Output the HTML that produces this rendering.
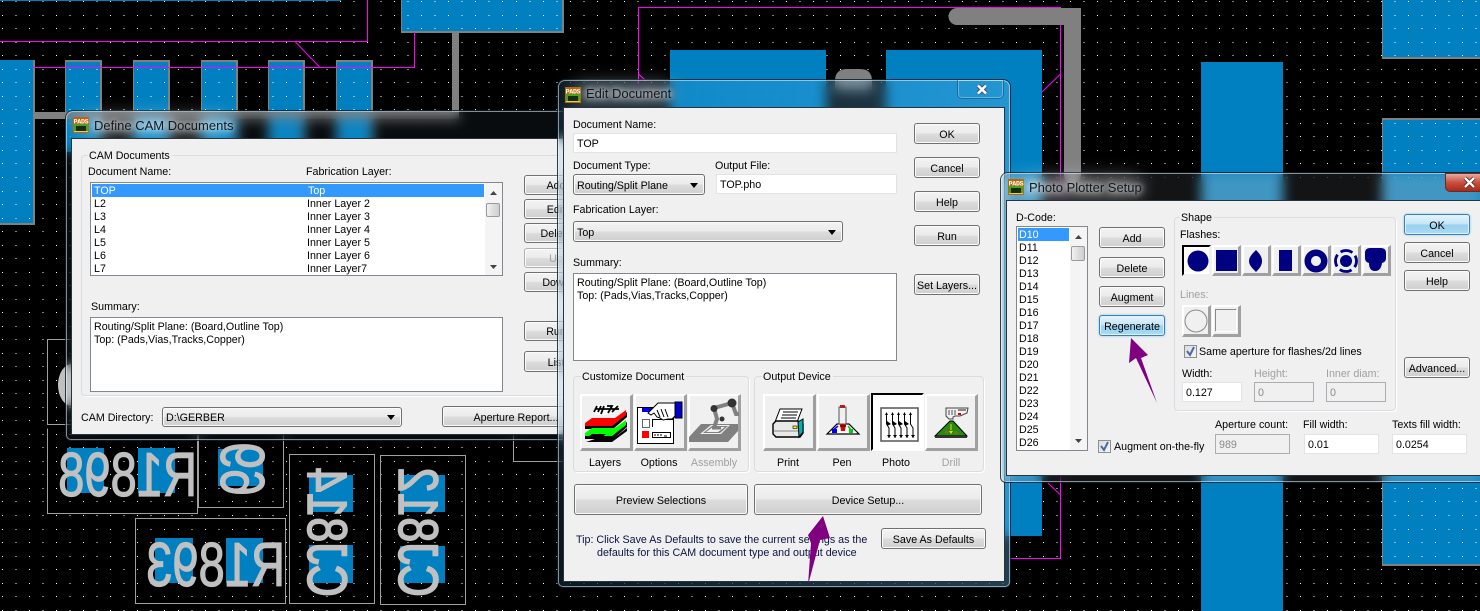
<!DOCTYPE html>
<html><head><meta charset="utf-8"><title>CAM Documents</title>
<style>
html,body{margin:0;padding:0;background:#000;width:1480px;height:611px;overflow:hidden}
#r{position:relative;width:1480px;height:611px;overflow:hidden;font:10.7px/13px "Liberation Sans",sans-serif;color:#000}
#r svg{position:absolute;left:0;top:0;overflow:visible}
.a{position:absolute;box-sizing:border-box}
.t{position:absolute;white-space:pre;height:13px;margin-top:1px}
.g{color:#a0a0a0}
.frame{position:absolute;box-sizing:border-box;border-radius:7px 7px 5px 5px;backdrop-filter:blur(6px);-webkit-backdrop-filter:blur(6px);box-shadow:0 0 0 1px rgba(10,30,45,.85),inset 0 0 0 1px rgba(235,245,250,.55)}
.client{position:absolute;box-sizing:border-box;background:#f0f0f0;box-shadow:0 0 0 1px #27343e}
.title{position:absolute;white-space:pre;font-size:13px;line-height:16px;margin-top:1px;color:#101820;text-shadow:0 0 6px #fff,0 0 10px rgba(255,255,255,.8)}
.glow{position:absolute;background:rgba(255,255,255,.38);filter:blur(9px);border-radius:10px}
.b{position:absolute;box-sizing:border-box;display:flex;align-items:center;justify-content:center;white-space:pre;padding-top:3px;border:1px solid #707070;border-radius:3px;background:linear-gradient(#f3f3f3,#ebebeb 48%,#dcdcdc 52%,#cfcfcf);box-shadow:inset 0 0 0 1px #fbfbfb;color:#000}
.h{border-color:#3c7fb1;background:linear-gradient(#e5f4fc,#c4e5f6 48%,#98d1ef 52%,#a9dbf6);box-shadow:inset 0 0 0 1px #dff2fc,0 0 2px #7cc4ee}
.d{border-color:#adb2b5;color:#a0a0a0}
.c{justify-content:flex-start;padding-left:3px}
.c:after{content:"";position:absolute;right:6px;top:50%;margin-top:-2px;border:4px solid transparent;border-top:5px solid #000;border-bottom:0}
.i{position:absolute;box-sizing:border-box;background:#fff;border:1px solid #e2e3e5;padding-left:3px;line-height:20px;white-space:pre}
.o{border-color:#abadb3;background:#f0f0f0;color:#8a8a8a}
.list{position:absolute;box-sizing:border-box;background:#fff;border:1px solid #828790}
.grp{position:absolute;box-sizing:border-box;border:1px solid #d8dde2;border-radius:4px;box-shadow:1px 1px 0 #fff}
.lg{position:absolute;background:#f0f0f0;padding:0 2px 0 1px;height:13px;margin-top:1px;white-space:pre}
.sel{position:absolute;background:#3399ff}
.sb{position:absolute;background:#f4f4f4}
.th{position:absolute;box-sizing:border-box;border:1px solid #9a9a9a;border-radius:2px;background:linear-gradient(90deg,#f2f2f2,#dcdcdc 55%,#cfcfcf)}
.ib{position:absolute;box-sizing:border-box;background:#f0f0f0;border-style:solid;border-width:2px 3px 3px 2px;border-color:#fff #a0a0a0 #a0a0a0 #fff}
.ip{background:#fff;border-color:#000 #fff #fff #000;border-width:2px 2px 2px 2px}
.cb{position:absolute;box-sizing:border-box;width:13px;height:13px;border:1px solid #8e8f8f;background:linear-gradient(135deg,#dcdcdc,#f6f6f6)}
</style></head><body><div id="r">

<svg width="1480" height="611">
<g fill="#808080">
<rect x="0" y="60" width="35" height="165"/>
<rect x="65" y="60" width="37" height="90"/><rect x="133" y="60" width="37" height="90"/><rect x="201" y="60" width="37" height="90"/><rect x="268" y="60" width="37" height="90"/><rect x="336" y="60" width="37" height="90"/>
<rect x="401" y="0" width="163" height="33"/>
<rect x="1382" y="0" width="98" height="59"/><rect x="1382" y="118" width="98" height="448"/>
</g>
<g fill="#0080c0">
<rect x="0" y="60" width="33" height="163"/>
<rect x="66" y="62" width="34" height="90"/><rect x="134" y="62" width="34" height="90"/><rect x="202" y="62" width="34" height="90"/><rect x="269" y="62" width="34" height="90"/><rect x="337" y="62" width="34" height="90"/>
<rect x="402" y="0" width="160" height="31"/>
<rect x="1383" y="0" width="97" height="57"/><rect x="1383" y="120" width="97" height="444"/>
</g>
<path fill="none" stroke="#fff" stroke-width="1" stroke-dasharray="1 12.52" shape-rendering="crispEdges" d="M2 1.5H1480M2 15.5H1480M2 28.5H1480M2 42.5H1480M2 55.5H1480M2 69.5H1480M2 82.5H1480M2 96.5H1480M2 109.5H1480M2 123.5H1480M2 136.5H1480M2 150.5H1480M2 163.5H1480M2 177.5H1480M2 191.5H1480M2 204.5H1480M2 218.5H1480M2 231.5H1480M2 245.5H1480M2 258.5H1480M2 272.5H1480M2 285.5H1480M2 299.5H1480M2 312.5H1480M2 326.5H1480M2 339.5H1480M2 353.5H1480M2 366.5H1480M2 380.5H1480M2 393.5H1480M2 407.5H1480M2 420.5H1480M2 434.5H1480M2 447.5H1480M2 461.5H1480M2 474.5H1480M2 488.5H1480M2 501.5H1480M2 515.5H1480M2 529.5H1480M2 542.5H1480M2 556.5H1480M2 569.5H1480M2 583.5H1480M2 596.5H1480M2 610.5H1480"/>
<g fill="#0080c0">
<rect x="0" y="0" width="341" height="1"/>
<rect x="670" y="50" width="156" height="490"/>
<rect x="886" y="50" width="156" height="486"/>
<rect x="1201" y="62" width="82" height="549"/>
</g>
<g fill="none" stroke="#ff00ff" stroke-width="1">
<path d="M0 41.500H367.500V0"/>
<path d="M295 41.500L320 67.500"/>
<path d="M33 67.500H414.500V32"/>
<path d="M638.500 84V7.500H1060.500V558.500H1010M638.500 74L646 81M1060.500 74L1042 92M1048 483L1060.500 495"/>
</g>
<g fill="#808080">
<rect x="452" y="32" width="7" height="87"/><rect x="35" y="112" width="424" height="7"/>
<path d="M835 90V81Q835 69 847 69H860Q872 69 872 81V90Z"/>
</g>
<path d="M957 16.5H1072.5V175" fill="none" stroke="#808080" stroke-width="17" stroke-linecap="round"/>
<g fill="none" stroke="#a0a0a0" stroke-width="1" shape-rendering="crispEdges">
<path d="M100 339.5H47.5V424.5H100"/>
<path d="M47.5 428.5V513.5H197.5V420"/>
<path d="M198.5 420V507.5H283.5V420"/>
<rect x="135.5" y="518.5" width="150" height="85"/>
<rect x="289.5" y="454.5" width="85" height="149"/>
<rect x="380.5" y="455.5" width="85" height="149"/>
<path d="M513.5 430V461.5H570"/>
</g>
<g fill="#0080c0">
<rect x="67" y="448" width="37" height="45"/><rect x="138" y="448" width="37" height="45"/>
<rect x="218" y="449" width="45" height="37"/>
<rect x="155" y="538" width="38" height="45"/><rect x="226" y="538" width="37" height="45"/>
<rect x="309" y="475" width="44" height="37"/><rect x="309" y="545" width="44" height="38"/>
<rect x="400" y="475" width="45" height="37"/><rect x="400" y="546" width="45" height="37"/>
</g>
<ellipse cx="72" cy="385" rx="14" ry="21" fill="#c0c0c0"/>
<g fill="#c0c0c0" stroke="#c0c0c0" stroke-width="1.2" font-family="Liberation Sans" font-size="62">
<text transform="matrix(-.76 0 0 1 197 496)">R1898</text>
<text transform="matrix(-.76 0 0 1 285 586)">R1893</text>
<text transform="matrix(0 -.78 -1 0 221 496)">69</text>
</g>
<g fill="#c0c0c0" stroke="#c0c0c0" stroke-width="1.6" font-family="Liberation Sans" font-size="56">
<text transform="matrix(0 -.8 -1 0 308 597)">CJ814</text>
<text transform="matrix(0 -.8 -1 0 399 597)">CJ812</text>
</g>
</svg>

<!-- DEFINE CAM -->
<div class="frame" style="left:66px;top:111px;width:520px;height:329px;background:rgba(150,200,235,.06)"></div>
<div class="glow" style="left:80px;top:116px;width:150px;height:18px"></div>
<svg width="1480" height="611"><rect x="73" y="117" width="16" height="16" fill="#b86a08"/><rect x="73" y="117" width="16" height="7" fill="#c8600a"/><text x="73.6" y="123.4" font-size="6.6" font-weight="bold" fill="#fff" font-family="Liberation Mono" textLength="15">PADS</text><rect x="74" y="124" width="14" height="8" fill="#48a020"/><rect x="76" y="126" width="10" height="5" fill="#1a2a18"/><rect x="74" y="131" width="14" height="1" fill="#f0d020"/></svg>
<div class="title" style="left:94px;top:117px">Define CAM Documents</div>
<div class="client" style="left:72px;top:139px;width:510px;height:295px"></div>
<div class="grp" style="left:81px;top:155px;width:500px;height:241px"></div>
<div class="lg" style="left:88px;top:149px">CAM Documents</div>
<div class="t" style="left:88px;top:165px">Document Name:</div>
<div class="t" style="left:306px;top:165px">Fabrication Layer:</div>
<div class="list" style="left:90px;top:182px;width:413px;height:94px"></div>
<div class="sel" style="left:92px;top:184px;width:392px;height:13px"></div>
<div class="t" style="left:94px;top:184px;color:#fff">TOP</div><div class="t" style="left:308px;top:184px;color:#fff">Top</div>
<div class="t" style="left:94px;top:197px">L2</div><div class="t" style="left:307px;top:197px">Inner Layer 2</div>
<div class="t" style="left:94px;top:210px">L3</div><div class="t" style="left:307px;top:210px">Inner Layer 3</div>
<div class="t" style="left:94px;top:223px">L4</div><div class="t" style="left:307px;top:223px">Inner Layer 4</div>
<div class="t" style="left:94px;top:236px">L5</div><div class="t" style="left:307px;top:236px">Inner Layer 5</div>
<div class="t" style="left:94px;top:249px">L6</div><div class="t" style="left:307px;top:249px">Inner Layer 6</div>
<div class="t" style="left:94px;top:262px">L7</div><div class="t" style="left:307px;top:262px">Inner Layer7</div>
<div class="sb" style="left:485px;top:183px;width:17px;height:92px"></div>
<div class="th" style="left:486px;top:203px;width:14px;height:14px"></div>
<svg width="1480" height="611"><path d="M490 195L493.500 191L497 195ZM490 265L497 265L493.500 269Z" fill="#444"/></svg>
<div class="b" style="left:524px;top:175px;width:64px;height:20px">Add</div>
<div class="b" style="left:524px;top:199px;width:64px;height:20px">Edit</div>
<div class="b" style="left:524px;top:223px;width:64px;height:20px">Delete</div>
<div class="b d" style="left:524px;top:248px;width:64px;height:20px">Up</div>
<div class="b" style="left:524px;top:272px;width:64px;height:20px">Down</div>
<div class="t" style="left:91px;top:300px">Summary:</div>
<div class="list" style="left:90px;top:317px;width:413px;height:75px"></div>
<div class="t" style="left:94px;top:320px">Routing/Split Plane: (Board,Outline Top)</div>
<div class="t" style="left:94px;top:333px">Top: (Pads,Vias,Tracks,Copper)</div>
<div class="b" style="left:524px;top:321px;width:64px;height:20px">Run</div>
<div class="b" style="left:524px;top:351px;width:64px;height:21px">List</div>
<div class="t" style="left:81px;top:411px">CAM Directory:</div>
<div class="b c" style="left:162px;top:407px;width:240px;height:20px">D:\GERBER</div>
<div class="b" style="left:442px;top:406px;width:148px;height:21px">Aperture Report...</div>

<!-- EDIT DOCUMENT -->
<div class="frame" style="left:558px;top:80px;width:452px;height:507px;background:linear-gradient(90deg,rgba(70,170,235,.14),rgba(110,195,245,.32))"></div>
<div class="glow" style="left:572px;top:84px;width:100px;height:18px"></div>
<div class="a" style="left:957px;top:80px;width:47px;height:19px;border:1px solid rgba(25,75,115,.55);border-top:0;border-radius:0 0 5px 5px;box-shadow:inset 0 0 0 1px rgba(255,255,255,.3)"></div>
<svg width="1480" height="611"><path d="M978 85.500L986 93.500M986 85.500L978 93.500" stroke="#3a5468" stroke-width="4.400"/><path d="M978 85.500L986 93.500M986 85.500L978 93.500" stroke="#fff" stroke-width="2.600"/>
<rect x="565" y="87" width="16" height="16" fill="#b86a08"/><text x="565.6" y="93.4" font-size="6.6" font-weight="bold" fill="#fff" font-family="Liberation Mono" textLength="15">PADS</text><rect x="566" y="94" width="14" height="8" fill="#48a020"/><rect x="568" y="96" width="10" height="5" fill="#1a2a18"/><rect x="566" y="101" width="14" height="1" fill="#f0d020"/></svg>
<div class="title" style="left:586px;top:85px">Edit Document</div>
<div class="client" style="left:564px;top:108px;width:440px;height:473px"></div>
<div class="t" style="left:573px;top:118px">Document Name:</div>
<div class="i" style="left:573px;top:133px;width:324px;height:20px">TOP</div>
<div class="t" style="left:573px;top:159px">Document Type:</div>
<div class="t" style="left:715px;top:159px">Output File:</div>
<div class="b c" style="left:573px;top:174px;width:132px;height:21px">Routing/Split Plane</div>
<div class="i" style="left:716px;top:174px;width:181px;height:20px">TOP.pho</div>
<div class="t" style="left:573px;top:203px">Fabrication Layer:</div>
<div class="b c" style="left:573px;top:221px;width:270px;height:21px">Top</div>
<div class="t" style="left:573px;top:256px">Summary:</div>
<div class="list" style="left:573px;top:273px;width:324px;height:88px"></div>
<div class="t" style="left:577px;top:276px">Routing/Split Plane: (Board,Outline Top)</div>
<div class="t" style="left:577px;top:289px">Top: (Pads,Vias,Tracks,Copper)</div>
<div class="b" style="left:914px;top:123px;width:66px;height:21px">OK</div>
<div class="b" style="left:914px;top:157px;width:66px;height:21px">Cancel</div>
<div class="b" style="left:914px;top:191px;width:66px;height:21px">Help</div>
<div class="b" style="left:914px;top:225px;width:66px;height:21px">Run</div>
<div class="b" style="left:914px;top:274px;width:66px;height:21px">Set Layers...</div>

<div class="grp" style="left:573px;top:376px;width:176px;height:96px"></div>
<div class="lg" style="left:581px;top:370px">Customize Document</div>
<div class="grp" style="left:754px;top:376px;width:230px;height:96px"></div>
<div class="lg" style="left:762px;top:370px">Output Device</div>
<div class="ib" style="left:580px;top:394px;width:53px;height:57px"></div>
<div class="ib" style="left:634px;top:394px;width:53px;height:57px"></div>
<div class="ib" style="left:688px;top:394px;width:53px;height:57px"></div>
<div class="ib" style="left:763px;top:394px;width:53px;height:57px"></div>
<div class="ib" style="left:817px;top:394px;width:53px;height:57px"></div>
<div class="ib ip" style="left:871px;top:393px;width:53px;height:58px"></div>
<div class="ib" style="left:925px;top:394px;width:53px;height:57px"></div>
<svg width="1480" height="611">
<path d="M593 413L598 405H620L616 410L606 415H596Z" fill="#fff"/>
<path d="M594 412l3-6M598 412l3-6M604 406l-3 8M607 406h5l-4 7M612 412l6-6M595 409h24" stroke="#000" stroke-width="1.8" fill="none"/>
<path d="M585 426L593 420H616L627 412V417L613 429H585Z" fill="#000"/>
<path d="M585 423L592 418H615L626 410V415L612 426H585Z" fill="#f00"/>
<path d="M585 436L593 430H616L627 422V427L613 439H585Z" fill="#000"/>
<path d="M585 433L592 428H615L626 420V425L612 436H585Z" fill="#0f0"/>
<path d="M585 439L592 434H606L600 439Z M598 438H614L627 428V431L612 442H586Z" fill="#000"/>
<rect x="637.500" y="407.500" width="36" height="36" fill="#fff" stroke="#000"/>
<rect x="642" y="408" width="13" height="4" fill="#0000e0"/>
<rect x="642.500" y="419.500" width="7" height="8" fill="none" stroke="#666"/>
<path d="M652.500 427V419.500H673" fill="none" stroke="#000"/>
<rect x="642" y="431" width="7" height="7" fill="#f00"/>
<rect x="652.500" y="432.500" width="18" height="5" fill="#fff" stroke="#000"/>
<path d="M655 436v-2M658 436v-2M661 436v-2M664 436h3" stroke="#000"/>
<path d="M648 413L658 403H675V416L672 419H668L663 420L660 418L657 417L654 413L651 415Z" fill="#fff" stroke="#000"/>
<path d="M657 410l3 7M661 409l3 8M665 409l3 8" stroke="#000"/>
<rect x="675" y="402" width="7" height="16" fill="#0000c8" stroke="#000"/>
<path d="M690 441V437L702 424H739V431L729 442H690Z" fill="#808080" transform="translate(-1 0)"/>
<path d="M700 434L711 425H730L721 434Z" fill="#f0f0f0"/><path d="M703 433L712 426H728L720 433Z" fill="#808080"/><path d="M706 432L713 427H725L718 432Z" fill="#f0f0f0"/>
<path d="M714 428L717 419L714 408L732 403L736 414H739" fill="none" stroke="#808080" stroke-width="4"/>
<path d="M712 428H721" stroke="#808080" stroke-width="3"/>
<circle cx="714" cy="408.500" r="3.500" fill="#333"/><circle cx="732" cy="403" r="4.500" fill="#333"/><circle cx="722" cy="419" r="2.500" fill="#333"/>
<path d="M780 409H802L797 422H775Z" fill="#fff" stroke="#000"/><path d="M783 412H798M782 415H797M781 418H796" stroke="#000"/>
<path d="M773 424L776 421H798L803 424V433L800 437H776L773 434Z" fill="#e8e8e8" stroke="#000" stroke-width="1.4"/>
<path d="M798 422L803 419V432L799 437Z" fill="#00b0b0" stroke="#000"/><rect x="793" y="426" width="4" height="2.500" fill="#ff0" stroke="#000" stroke-width=".6"/>
<path d="M774 431H798" stroke="#888"/>
<path d="M827 434L837 424H849L859 434Z" fill="#fff" stroke="#000" stroke-width="1.200"/>
<rect x="839" y="407" width="7" height="17" fill="#f0f0f0" stroke="#555"/><rect x="840" y="405" width="5" height="3" fill="#b02020"/>
<path d="M840 424H846L845 431H841Z" fill="#e00000"/><path d="M840 426H846" stroke="#000"/>
<path d="M838 426L832 431" stroke="#0000f0" stroke-width="1.5"/><path d="M834 429H837V433H832V429Z" fill="#0000f0"/>
<path d="M848 426L851 430" stroke="#00c000" stroke-width="1.500"/><rect x="849" y="429" width="4" height="4" fill="#00d000"/>
<rect x="881" y="408" width="37" height="33" fill="#fff" stroke="#555" stroke-width="1.500"/>
<g fill="none" stroke="#000"><path d="M886.500 413V424L889 428V438M892.500 413V424L895 428V438M898.500 413V424L901 428V438M904.500 413V424L907 428V438M910.500 413V424L913 428V438"/></g>
<path d="M885 415H888L886.500 412ZM891 415H894L892.500 412ZM897 415H900L898.500 412ZM903 415H906L904.500 412ZM909 415H912L910.500 412ZM887 435H891L889 438ZM893 435H897L895 438ZM899 435H903L901 438ZM905 435H909L907 438ZM911 435H915L913 438ZM887 421L891 424L887 426ZM893 421L897 424L893 426ZM899 421L903 424L899 426ZM905 421L909 424L905 426Z" fill="#000"/>
<path d="M935 436L950 421H953L967 436Z" fill="#2a8a10" stroke="#000"/><rect x="935" y="436" width="32" height="2" fill="#333"/>
<path d="M944 433l3-3 2 3zM955 431l4 3h-5z" fill="#807020"/><path d="M949 431h4l-2 3z" fill="#e8e000"/><path d="M951 424V430" stroke="#e8e000"/>
<path d="M946 408H968L967 413L960 416H955L953 417V419H949L946 416Z" fill="#f0f0f0" stroke="#444"/><path d="M949 410v5M952 410v5M955 410v5" stroke="#555"/><path d="M958 410h8" stroke="#888" stroke-width="2"/><path d="M958 414h3" stroke="#d00" stroke-width="2"/>
</svg>
<div class="t" style="left:580px;width:50px;text-align:center;top:456px">Layers</div>
<div class="t" style="left:634px;width:50px;text-align:center;top:456px">Options</div>
<div class="t g" style="left:689px;width:50px;text-align:center;top:456px">Assembly</div>
<div class="t" style="left:763px;width:50px;text-align:center;top:456px">Print</div>
<div class="t" style="left:817px;width:50px;text-align:center;top:456px">Pen</div>
<div class="t" style="left:871px;width:50px;text-align:center;top:456px">Photo</div>
<div class="t g" style="left:926px;width:50px;text-align:center;top:456px">Drill</div>
<div class="b" style="left:574px;top:484px;width:174px;height:31px">Preview Selections</div>
<div class="b" style="left:754px;top:484px;width:228px;height:31px">Device Setup...</div>
<div class="t" style="left:576px;top:533px;color:#0a1440">Tip: Click Save As Defaults to save the current settings as the</div>
<div class="t" style="left:597px;top:546px;color:#0a1440">defaults for this CAM document type and output device</div>
<div class="b" style="left:881px;top:528px;width:105px;height:21px">Save As Defaults</div>
<svg width="1480" height="611"><path d="M823 516L830 538L820 540L808 585L811 543L808 535Z" fill="#800080"/></svg>

<!-- PHOTO PLOTTER -->
<div class="frame" style="left:1001px;top:173px;width:500px;height:309px;backdrop-filter:blur(6px) saturate(.6) brightness(1.2);-webkit-backdrop-filter:blur(6px) saturate(.6) brightness(1.2);background:rgba(200,225,240,.09)"></div>
<div class="glow" style="left:1012px;top:177px;width:130px;height:20px"></div>
<div class="a" style="left:1445px;top:173px;width:50px;height:19px;border:1px solid #6e2a22;border-radius:0 0 0 5px;background:linear-gradient(#e8a9a0,#c8503f 50%,#a82a1c)"></div>
<svg width="1480" height="611"><path d="M1465 178L1474 187M1474 178L1465 187" stroke="#4a1a14" stroke-width="4"/><path d="M1465 178L1474 187M1474 178L1465 187" stroke="#fff" stroke-width="2.400"/>
<rect x="1008" y="179" width="16" height="16" fill="#b86a08"/><text x="1008.600" y="185.400" font-size="6.6" font-weight="bold" fill="#fff" font-family="Liberation Mono" textLength="15">PADS</text><rect x="1009" y="186" width="14" height="8" fill="#48a020"/><rect x="1011" y="188" width="10" height="5" fill="#1a2a18"/><rect x="1009" y="193" width="14" height="1" fill="#f0d020"/></svg>
<div class="title" style="left:1029px;top:179px">Photo Plotter Setup</div>
<div class="client" style="left:1007px;top:201px;width:490px;height:274px"></div>
<div class="t" style="left:1016px;top:211px">D-Code:</div>
<div class="list" style="left:1016px;top:226px;width:72px;height:225px"></div>
<div class="sel" style="left:1018px;top:228px;width:51px;height:13px"></div>
<div class="t" style="left:1019px;top:228px;color:#fff">D10</div>
<div class="t" style="left:1019px;top:241px">D11</div><div class="t" style="left:1019px;top:254px">D12</div><div class="t" style="left:1019px;top:267px">D13</div><div class="t" style="left:1019px;top:280px">D14</div><div class="t" style="left:1019px;top:293px">D15</div><div class="t" style="left:1019px;top:306px">D16</div><div class="t" style="left:1019px;top:319px">D17</div><div class="t" style="left:1019px;top:332px">D18</div><div class="t" style="left:1019px;top:345px">D19</div><div class="t" style="left:1019px;top:358px">D20</div><div class="t" style="left:1019px;top:371px">D21</div><div class="t" style="left:1019px;top:384px">D22</div><div class="t" style="left:1019px;top:397px">D23</div><div class="t" style="left:1019px;top:410px">D24</div><div class="t" style="left:1019px;top:423px">D25</div><div class="t" style="left:1019px;top:436px">D26</div>
<div class="sb" style="left:1070px;top:227px;width:17px;height:223px"></div>
<div class="th" style="left:1071px;top:246px;width:14px;height:15px"></div>
<svg width="1480" height="611"><path d="M1075 239L1078.500 235L1082 239ZM1075 439H1082L1078.500 443Z" fill="#444"/></svg>
<div class="b" style="left:1099px;top:227px;width:66px;height:21px">Add</div>
<div class="b" style="left:1099px;top:257px;width:66px;height:21px">Delete</div>
<div class="b" style="left:1099px;top:286px;width:66px;height:21px">Augment</div>
<div class="b h" style="left:1099px;top:315px;width:66px;height:21px">Regenerate</div>
<div class="grp" style="left:1174px;top:217px;width:222px;height:194px"></div>
<div class="lg" style="left:1180px;top:211px">Shape</div>
<div class="t" style="left:1180px;top:228px">Flashes:</div>
<div class="ib ip" style="left:1182px;top:245px;width:29px;height:31px;border-right-color:#f0f0f0;border-bottom-color:#f0f0f0"></div>
<div class="ib" style="left:1212px;top:245px;width:29px;height:31px"></div>
<div class="ib" style="left:1242px;top:245px;width:29px;height:31px"></div>
<div class="ib" style="left:1272px;top:245px;width:29px;height:31px"></div>
<div class="ib" style="left:1302px;top:245px;width:29px;height:31px"></div>
<div class="ib" style="left:1332px;top:245px;width:29px;height:31px"></div>
<div class="ib" style="left:1362px;top:245px;width:29px;height:31px"></div>
<div class="t g" style="left:1180px;top:288px">Lines:</div>
<div class="ib" style="left:1182px;top:305px;width:29px;height:32px"></div>
<div class="ib" style="left:1212px;top:305px;width:29px;height:32px"></div>
<svg width="1480" height="611">
<g fill="#000080">
<circle cx="1198" cy="261" r="10.500"/>
<rect x="1216" y="250" width="21" height="21"/>
<path d="M1256 250C1260 254 1262 257 1262 261C1262 265 1260 268 1256 272C1252 268 1249 265 1249 261C1249 257 1252 254 1256 250Z"/>
<rect x="1279" y="250" width="13" height="21"/>
<path fill-rule="evenodd" d="M1316 249.500a11.500 11.500 0 1 0 .01 0ZM1316 256a5 5 0 1 1-.01 0Z"/>
<circle cx="1346" cy="261" r="6"/>
<path d="M1365 253Q1365 248 1370 248H1381Q1386 248 1386 253V258Q1386 262 1382 263Q1381 271 1375 271Q1369 271 1369 263Q1365 262 1365 258Z"/>
</g>
<circle cx="1346" cy="261" r="10.500" fill="none" stroke="#000080" stroke-width="2.800" stroke-dasharray="12.500 4" stroke-dashoffset="6"/>
<circle cx="1196" cy="321" r="11" fill="none" stroke="#8a8a8a"/>
<path d="M1236.500 309.500H1215.500V331.500" fill="none" stroke="#8a8a8a"/><path d="M1215.500 331.500H1236.500V309.500" fill="none" stroke="#fff"/>
</svg>
<div class="cb" style="left:1184px;top:345px"></div>
<svg width="1480" height="611"><path d="M1187 351L1190 355L1194 347" fill="none" stroke="#4a6aa8" stroke-width="2"/></svg>
<div class="t" style="left:1199px;top:345px">Same aperture for flashes/2d lines</div>
<div class="t" style="left:1182px;top:367px">Width:</div>
<div class="t g" style="left:1254px;top:367px">Height:</div>
<div class="t g" style="left:1326px;top:367px">Inner diam:</div>
<div class="i" style="left:1182px;top:382px;width:60px;height:20px">0.127</div>
<div class="i o" style="left:1254px;top:382px;width:60px;height:20px">0</div>
<div class="i o" style="left:1326px;top:382px;width:60px;height:20px">0</div>
<div class="b h" style="left:1404px;top:214px;width:66px;height:21px">OK</div>
<div class="b" style="left:1404px;top:242px;width:66px;height:21px">Cancel</div>
<div class="b" style="left:1404px;top:270px;width:66px;height:21px">Help</div>
<div class="b" style="left:1404px;top:357px;width:66px;height:21px">Advanced...</div>
<div class="cb" style="left:1098px;top:440px"></div>
<svg width="1480" height="611"><path d="M1101 446L1104 450L1108 442" fill="none" stroke="#4a6aa8" stroke-width="2"/></svg>
<div class="t" style="left:1114px;top:440px">Augment on-the-fly</div>
<div class="t" style="left:1215px;top:418px">Aperture count:</div>
<div class="t" style="left:1303px;top:418px">Fill width:</div>
<div class="t" style="left:1392px;top:418px">Texts fill width:</div>
<div class="i o" style="left:1215px;top:434px;width:75px;height:20px">989</div>
<div class="i" style="left:1304px;top:434px;width:75px;height:20px">0.01</div>
<div class="i" style="left:1392px;top:434px;width:75px;height:20px">0.0254</div>
<svg width="1480" height="611"><path d="M1131 338L1148 355L1141 358L1157 403L1136 358L1129 363Z" fill="#800080"/></svg>
</div></body></html>
